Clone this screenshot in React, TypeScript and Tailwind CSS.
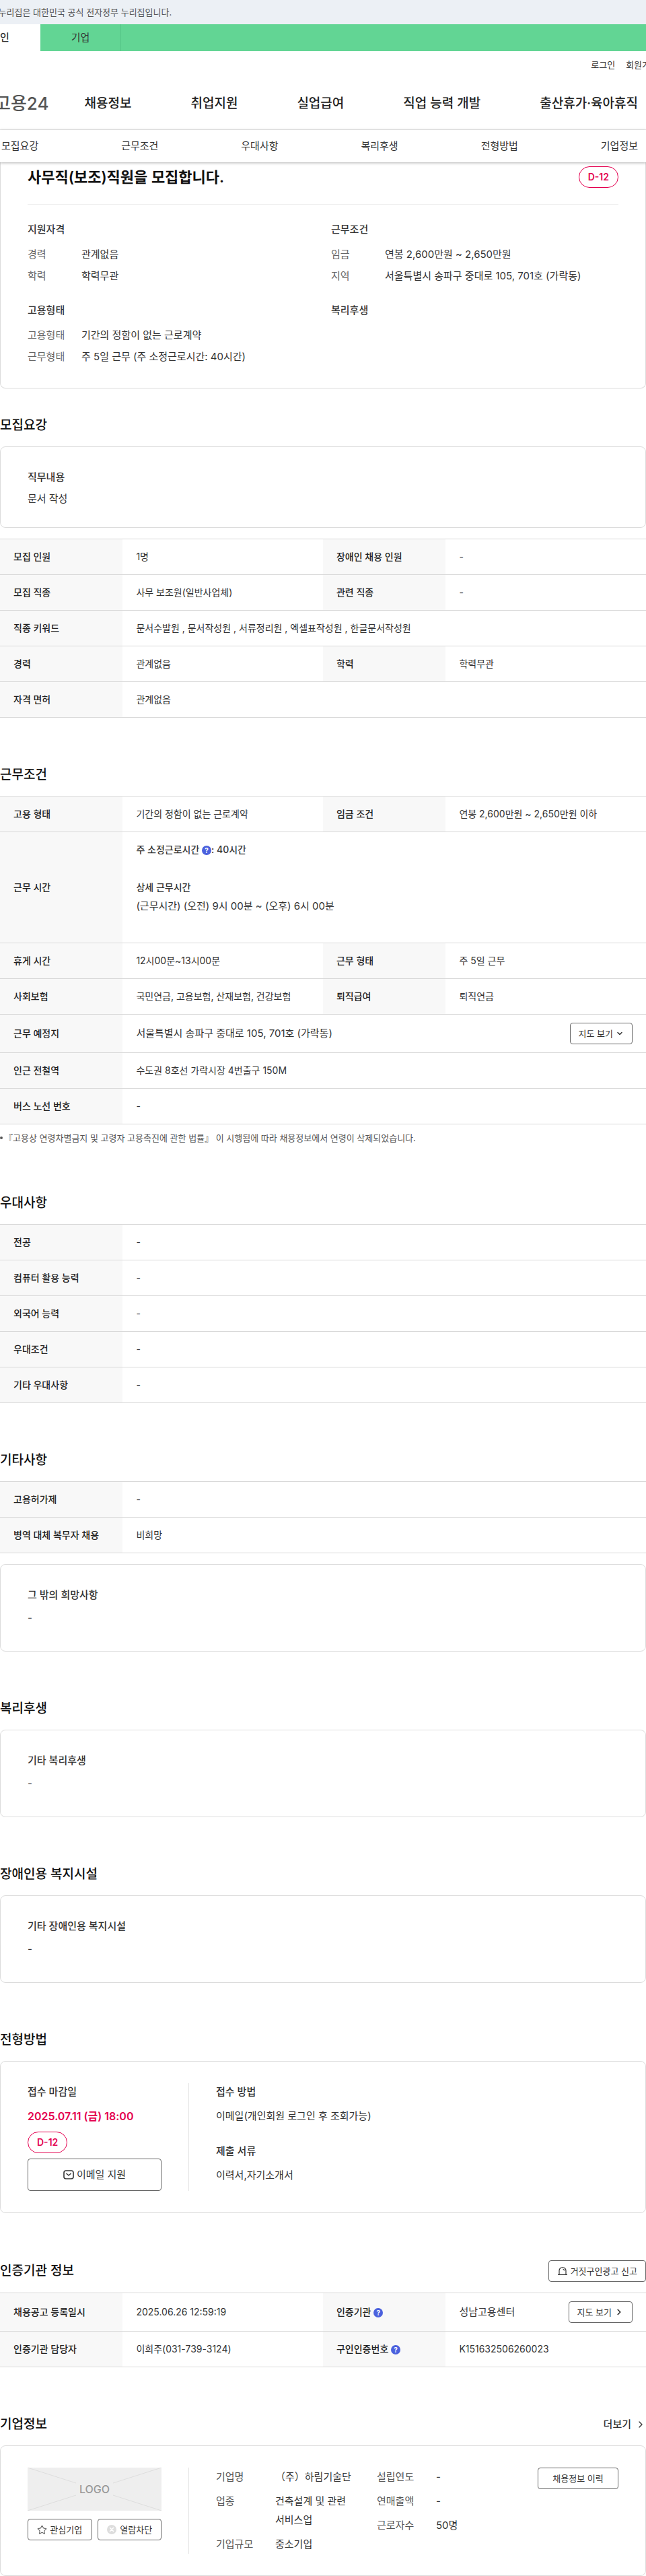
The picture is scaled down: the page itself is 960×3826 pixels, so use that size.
import type { ReactNode } from "react"
import { ChevronDown, ChevronRight, Star } from "lucide-react"

const mainMenu = ["채용정보", "취업지원", "실업급여", "직업 능력 개발", "출산휴가·육아휴직"]
const tabs = ["모집요강", "근무조건", "우대사항", "복리후생", "전형방법", "기업정보"]

interface Cell {
  label: ReactNode
  value: ReactNode
}

interface SummaryGroup {
  title: string
  items: { label: string; value: string }[]
}

const summary: SummaryGroup[] = [
  {
    title: "지원자격",
    items: [
      { label: "경력", value: "관계없음" },
      { label: "학력", value: "학력무관" },
    ],
  },
  {
    title: "근무조건",
    items: [
      { label: "임금", value: "연봉 2,600만원 ~ 2,650만원" },
      { label: "지역", value: "서울특별시 송파구 중대로 105, 701호 (가락동)" },
    ],
  },
  {
    title: "고용형태",
    items: [
      { label: "고용형태", value: "기간의 정함이 없는 근로계약" },
      { label: "근무형태", value: "주 5일 근무 (주 소정근로시간: 40시간)" },
    ],
  },
  { title: "복리후생", items: [] },
]

const recruitRows: Cell[][] = [
  [
    { label: "모집 인원", value: "1명" },
    { label: "장애인 채용 인원", value: "-" },
  ],
  [
    { label: "모집 직종", value: "사무 보조원(일반사업체)" },
    { label: "관련 직종", value: "-" },
  ],
  [{ label: "직종 키워드", value: "문서수발원 , 문서작성원 , 서류정리원 , 엑셀표작성원 , 한글문서작성원" }],
  [
    { label: "경력", value: "관계없음" },
    { label: "학력", value: "학력무관" },
  ],
  [{ label: "자격 면허", value: "관계없음" }],
]

const workRows: Cell[][] = [
  [
    { label: "고용 형태", value: "기간의 정함이 없는 근로계약" },
    { label: "임금 조건", value: "연봉 2,600만원 ~ 2,650만원 이하" },
  ],
  [
    {
      label: "근무 시간",
      value: (
        <div className="pb-7 leading-7">
          <p className="font-medium">
            주 소정근로시간 <HelpButton label="주 소정근로시간 도움말" />: 40시간
          </p>
          <p className="pt-7 font-medium">상세 근무시간</p>
          <p className="text-[15px] leading-7">(근무시간) (오전) 9시 00분 ~ (오후) 6시 00분</p>
        </div>
      ),
    },
  ],
  [
    { label: "휴게 시간", value: "12시00분~13시00분" },
    { label: "근무 형태", value: "주 5일 근무" },
  ],
  [
    { label: "사회보험", value: "국민연금, 고용보험, 산재보험, 건강보험" },
    { label: "퇴직급여", value: "퇴직연금" },
  ],
  [
    {
      label: "근무 예정지",
      value: (
        <div className="flex items-center justify-between text-[15px]">
          <span>서울특별시 송파구 중대로 105, 701호 (가락동)</span>
          <SmallButton>
            지도 보기
            <ChevronDown size={12} strokeWidth={3} />
          </SmallButton>
        </div>
      ),
    },
  ],
  [{ label: "인근 전철역", value: "수도권 8호선 가락시장 4번출구 150M" }],
  [{ label: "버스 노선 번호", value: "-" }],
]

const preferRows: Cell[][] = [
  [{ label: "전공", value: "-" }],
  [{ label: "컴퓨터 활용 능력", value: "-" }],
  [{ label: "외국어 능력", value: "-" }],
  [{ label: "우대조건", value: "-" }],
  [{ label: "기타 우대사항", value: "-" }],
]

const etcRows: Cell[][] = [
  [{ label: "고용허가제", value: "-" }],
  [{ label: "병역 대체 복무자 채용", value: "비희망" }],
]

const agencyRows: Cell[][] = [
  [
    { label: "채용공고 등록일시", value: "2025.06.26 12:59:19" },
    {
      label: (
        <>
          인증기관 <HelpButton label="인증기관 도움말" />
        </>
      ),
      value: (
        <div className="flex items-center justify-between text-[15px]">
          <span>성남고용센터</span>
          <SmallButton>
            지도 보기
            <ChevronRight size={14} strokeWidth={3} />
          </SmallButton>
        </div>
      ),
    },
  ],
  [
    { label: "인증기관 담당자", value: "이희주(031-739-3124)" },
    {
      label: (
        <>
          구인인증번호 <HelpButton label="구인인증번호 도움말" />
        </>
      ),
      value: "K151632506260023",
    },
  ],
]

function HelpButton({ label }: { label: string }) {
  return (
    <button
      aria-label={label}
      className="inline-flex h-3.5 w-3.5 items-center justify-center rounded-full bg-[#4b61dd] text-[10px] font-bold leading-none text-white"
    >
      ?
    </button>
  )
}

function SmallButton({ children, className = "px-3" }: { children: ReactNode; className?: string }) {
  return (
    <button
      className={`flex h-8 items-center justify-center gap-1 whitespace-nowrap rounded border border-[#666] bg-white text-[13px] text-[#333] ${className}`}
    >
      {children}
    </button>
  )
}

function DdayBadge() {
  return (
    <span className="inline-flex h-8 items-center rounded-full border border-[#e4004f] px-[13px] text-sm font-semibold text-[#e4004f]">
      D-12
    </span>
  )
}

function InfoTable({ rows }: { rows: Cell[][] }) {
  return (
    <table className="w-full table-fixed border-t border-[#d8d8d8] text-sm">
      <colgroup>
        <col className="w-[19%]" />
        <col className="w-[31%]" />
        <col className="w-[19%]" />
        <col className="w-[31%]" />
      </colgroup>
      <tbody>
        {rows.map((row, i) => (
          <tr key={i} className="h-[53px] border-b border-[#d8d8d8]">
            {row.map((cell, j) => [
              <th key={`h${j}`} scope="row" className="bg-[#f8f8f8] py-3 pl-5 text-left font-medium text-[#222]">
                {cell.label}
              </th>,
              <td key={`d${j}`} colSpan={row.length === 1 ? 3 : 1} className="px-5 py-3">
                {cell.value}
              </td>,
            ])}
          </tr>
        ))}
      </tbody>
    </table>
  )
}

function Section({ title, action, children }: { title: string; action?: ReactNode; children: ReactNode }) {
  return (
    <section className="mt-[70px]">
      <div className="mb-4 flex min-h-[30px] items-center justify-between">
        <h2 className="text-[19px] font-medium text-[#111]">{title}</h2>
        {action}
      </div>
      {children}
    </section>
  )
}

function Panel({ children, className }: { children: ReactNode; className: string }) {
  return <div className={`rounded-lg border border-[#dcdcdc] ${className}`}>{children}</div>
}

function TextPanel({ title, text }: { title: string; text: string }) {
  return (
    <Panel className="px-10 py-8">
      <h3 className="font-medium leading-[26px]">{title}</h3>
      <p className="mb-1 mt-2 leading-[26px]">{text}</p>
    </Panel>
  )
}

function Header() {
  return (
    <header>
      <div className="flex h-9 items-center overflow-hidden bg-[#ecf0f5] text-[13px] text-[#555]">
        <p className="-ml-[18px] whitespace-nowrap">이 누리집은 대한민국 공식 전자정부 누리집입니다.</p>
      </div>
      <div className="flex h-10 overflow-hidden bg-[#62d594] text-[15px]">
        <a href="#" className="-ml-[60px] flex w-[120px] items-center justify-center bg-white font-medium">
          개인
        </a>
        <a href="#" className="flex w-[120px] items-center justify-center border-r border-[#55c586]">
          기업
        </a>
      </div>
      <div className="flex h-10 items-center justify-end overflow-hidden text-[13px]">
        <div className="-mr-[18px] flex gap-4">
          <a href="#">로그인</a>
          <a href="#">회원가입</a>
        </div>
      </div>
      <nav className="flex h-[77px] items-center overflow-hidden whitespace-nowrap border-b border-[#eee]">
        <a href="#" className="-ml-2 text-[26px] font-medium text-[#555]">
          고용24
        </a>
        <ul className="ml-[53px] flex gap-[88px] text-[19px] font-medium text-[#222]">
          {mainMenu.map((item) => (
            <li key={item}>
              <a href="#">{item}</a>
            </li>
          ))}
        </ul>
      </nav>
      <nav className="relative flex h-12 items-center justify-between bg-white pl-0.5 pr-3 text-[15px] shadow-[0_1px_4px_rgba(0,0,0,0.3)]">
        {tabs.map((tab) => (
          <a key={tab} href="#">
            {tab}
          </a>
        ))}
      </nav>
    </header>
  )
}

function CompanyItem({ label, children }: { label: string; children: ReactNode }) {
  return (
    <div className="flex">
      <dt className="w-[88px] shrink-0 text-[#555]">{label}</dt>
      <dd>{children}</dd>
    </div>
  )
}

export default function App() {
  return (
    <div className='bg-white font-[Inter,"Noto_Sans_CJK_KR",sans-serif] text-[15px] leading-6 text-[#333]'>
      <Header />

      <main>
        <div className="rounded-b-lg border border-t-0 border-[#dcdcdc] px-10 pb-[34px] pt-1.5">
          <div className="flex items-center justify-between">
            <h1 className="text-[22px] font-semibold text-[#111]">사무직(보조)직원을 모집합니다.</h1>
            <DdayBadge />
          </div>
          <div className="mt-6 grid grid-cols-[451fr_427fr] gap-y-[27px] border-t border-[#eee] pt-[25px]">
            {summary.map((group) => (
              <div key={group.title}>
                <h2 className="font-medium">{group.title}</h2>
                <dl className="mt-[13px] space-y-2">
                  {group.items.map((item) => (
                    <div key={item.label} className="flex">
                      <dt className="w-20 shrink-0 text-[#666]">{item.label}</dt>
                      <dd>{item.value}</dd>
                    </div>
                  ))}
                </dl>
              </div>
            ))}
          </div>
        </div>

        <section className="mt-[41px]">
          <h2 className="mb-[17px] text-[19px] font-medium leading-7 text-[#111]">모집요강</h2>
          <Panel className="mb-4 px-10 pb-[30px] pt-8">
            <h3 className="font-medium leading-[26px]">직무내용</h3>
            <p className="mt-[7px]">문서 작성</p>
          </Panel>
          <InfoTable rows={recruitRows} />
        </section>

        <Section title="근무조건">
          <InfoTable rows={workRows} />
          <p className="mb-[72px] mt-2.5 flex items-center gap-0.5 text-[13px] leading-5 text-[#555]">
            <span className="h-1 w-1 rounded-full bg-[#555]" />
            『고용상 연령차별금지 및 고령자 고용촉진에 관한 법률』 이 시행됨에 따라 채용정보에서 연령이 삭제되었습니다.
          </p>
        </Section>

        <Section title="우대사항">
          <InfoTable rows={preferRows} />
        </Section>

        <Section title="기타사항">
          <div className="space-y-4">
            <InfoTable rows={etcRows} />
            <TextPanel title="그 밖의 희망사항" text="-" />
          </div>
        </Section>

        <Section title="복리후생">
          <TextPanel title="기타 복리후생" text="-" />
        </Section>

        <Section title="장애인용 복지시설">
          <TextPanel title="기타 장애인용 복지시설" text="-" />
        </Section>

        <Section title="전형방법">
          <Panel className="flex px-10 py-8">
            <div className="w-60 shrink-0 border-r border-[#e4e4e4] pr-10">
              <h3 className="font-medium leading-[26px]">접수 마감일</h3>
              <p className="mb-[11px] mt-[11px] whitespace-nowrap text-base font-semibold text-[#e4004f]">
                2025.07.11 (금) 18:00
              </p>
              <div className="flex">
                <DdayBadge />
              </div>
              <button className="mt-2 flex h-12 w-full items-center justify-center gap-1 rounded border border-[#666]">
                <svg width="16" height="16" viewBox="0 0 16 16" fill="none" stroke="currentColor" strokeWidth="1.6">
                  <rect x="1" y="2" width="14" height="12" rx="3" />
                  <path d="M5 6.5 8 9l3-2.500" strokeLinecap="round" strokeLinejoin="round" />
                </svg>
                이메일 지원
              </button>
            </div>
            <div className="pl-10">
              <h3 className="font-medium leading-[26px]">접수 방법</h3>
              <p className="mt-[11px]">이메일(개인회원 로그인 후 조회가능)</p>
              <h3 className="mt-[27px] font-medium leading-[26px]">제출 서류</h3>
              <p className="mt-[11px]">이력서,자기소개서</p>
            </div>
          </Panel>
        </Section>

        <Section
          title="인증기관 정보"
          action={
            <SmallButton>
              <svg width="16" height="16" viewBox="0 0 16 16" fill="none" stroke="currentColor" strokeWidth="1.2">
                <path d="M3 13V7.500a5 5 0 0 1 10 0V13M1 13.500h14M8.500 5a2.500 2.500 0 0 1 2 2.500" />
              </svg>
              거짓구인광고 신고
            </SmallButton>
          }
        >
          <InfoTable rows={agencyRows} />
        </Section>

        <Section
          title="기업정보"
          action={
            <a href="#" className="flex items-center gap-1.5 font-medium">
              더보기
              <ChevronRight size={16} />
            </a>
          }
        >
          <Panel className="flex px-10 py-8">
            <div className="w-60 shrink-0 border-r border-[#e4e4e4] pr-10">
              <div className="relative flex h-16 items-center justify-center bg-[#eee]">
                <svg
                  className="absolute inset-0 h-full w-full"
                  viewBox="0 0 199 64"
                  preserveAspectRatio="none"
                  stroke="#ddd"
                >
                  <path d="M0 0l72 23M127 41l72 23M199 0l-72 23M72 41L0 64" />
                </svg>
                <span className="text-base font-medium text-[#999]">LOGO</span>
              </div>
              <div className="mt-3 grid grid-cols-2 gap-2">
                <SmallButton className="px-1">
                  <Star size={15} strokeWidth={1.8} className="text-[#666]" />
                  관심기업
                </SmallButton>
                <SmallButton className="px-1">
                  <svg width="16" height="16" viewBox="0 0 16 16">
                    <circle cx="8" cy="8" r="7" fill="#ddd" />
                    <path
                      d="M5.500 5.500l5 5M10.500 5.500l-5 5"
                      stroke="#fff"
                      strokeWidth="1.6"
                      strokeLinecap="round"
                    />
                  </svg>
                  열람차단
                </SmallButton>
              </div>
            </div>
            <div className="grid flex-1 grid-cols-[239fr_239fr] pl-10 leading-7">
              <dl className="space-y-2">
                <CompanyItem label="기업명">（주）하림기술단</CompanyItem>
                <CompanyItem label="업종">
                  건축설계 및 관련
                  <br />
                  서비스업
                </CompanyItem>
                <CompanyItem label="기업규모">중소기업</CompanyItem>
              </dl>
              <dl className="space-y-2">
                <CompanyItem label="설립연도">-</CompanyItem>
                <CompanyItem label="연매출액">-</CompanyItem>
                <CompanyItem label="근로자수">50명</CompanyItem>
              </dl>
            </div>
            <SmallButton className="w-[120px] shrink-0">채용정보 이력</SmallButton>
          </Panel>
        </Section>
      </main>
    </div>
  )
}
